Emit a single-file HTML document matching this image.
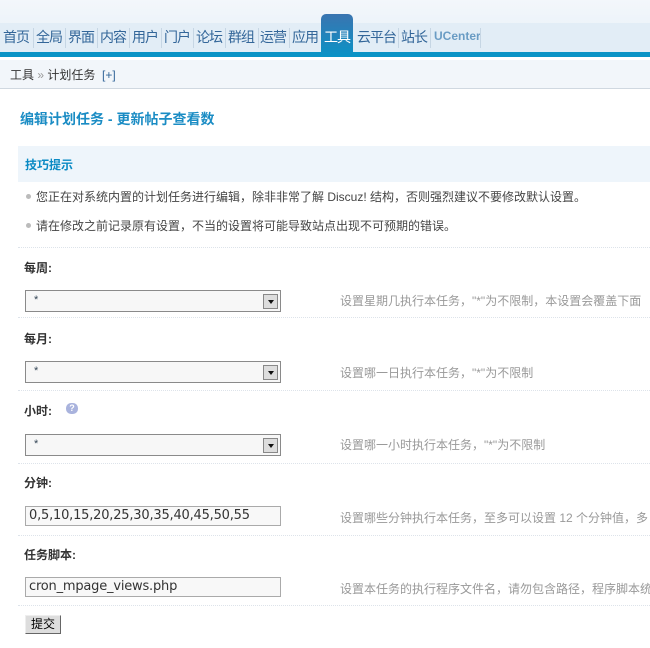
<!DOCTYPE html>
<html><head><meta charset="utf-8"><style>
*{margin:0;padding:0;box-sizing:border-box}
body{width:650px;height:648px;overflow:hidden;background:#fff;font-family:"Liberation Sans","Noto Sans CJK SC","WenQuanYi Zen Hei",sans-serif;font-size:12px;color:#333;position:relative}
.a{position:absolute}
.top{left:0;top:0;width:650px;height:52px;background:linear-gradient(#f3f7fb,#e6eff7)}
.navbg{left:0;top:23px;width:650px;height:29px;background:#e2edf6}
.line{left:0;top:52px;width:650px;height:5px;background:#0a93c6}
.nav{top:27px;font-size:14px;color:#336699;white-space:nowrap;letter-spacing:-1px}
.sep{top:28px;width:1px;height:20px;background:#c6d6e4}
.tab{left:321px;top:14px;width:32px;height:43px;background:linear-gradient(#3a74b0,#0a93c6);border-radius:5px 5px 0 0;color:#fff;font-size:14px;letter-spacing:-1px;padding-top:13px;text-align:center}
.bc{left:0;top:60px;width:650px;height:29px;background:#f2f6fa;border-bottom:1px solid #d0d8e0;padding:6px 0 0 10px;font-size:12px;color:#333}
.title{left:20px;top:109px;font-size:14px;font-weight:bold;color:#1a8cc4}
.tip{left:18px;top:146px;width:632px;height:36px;background:#eef5fb;padding:10px 0 0 7px;font-weight:bold;color:#0a8ac4;font-size:12px}
.bul{left:36px;font-size:12px;color:#444}
.dot{left:26px;width:5px;height:5px;border-radius:50%;background:#bbb}
.hr{left:18px;width:632px;border-top:1px dotted #dde3ea}
.lab{left:24px;font-weight:bold;font-size:12px;color:#333}
.sel{left:25px;width:256px;height:22px;border:1px solid #8a8a8a;background:#f7f7f7;font-size:11px;color:#345;padding:3px 8px}
.arr{right:2px;top:3px;width:15px;height:15px;border:1px solid #888;background:#ddd}
.arr:after{content:"";position:absolute;left:4px;top:5px;border:3px solid transparent;border-top:4px solid #111}
.inp{left:25px;width:256px;height:20px;border:1px solid #aaa;background:#f8f8f8;font-size:13px;color:#333;padding:1px 3px;font-family:"DejaVu Sans","Liberation Sans",sans-serif;letter-spacing:-0.2px}
.hint{left:340px;color:#999;font-size:12px;white-space:nowrap}
</style></head><body>
<div class="a top"></div><div class="a navbg"></div><div class="a line"></div>
<div class="a nav" style="left:3px">首页</div><div class="a sep" style="left:33px"></div>
<div class="a nav" style="left:36px">全局</div><div class="a sep" style="left:65px"></div>
<div class="a nav" style="left:68px">界面</div><div class="a sep" style="left:97px"></div>
<div class="a nav" style="left:100px">内容</div><div class="a sep" style="left:129px"></div>
<div class="a nav" style="left:132px">用户</div><div class="a sep" style="left:161px"></div>
<div class="a nav" style="left:164px">门户</div><div class="a sep" style="left:193px"></div>
<div class="a nav" style="left:196px">论坛</div><div class="a sep" style="left:225px"></div>
<div class="a nav" style="left:228px">群组</div><div class="a sep" style="left:258px"></div>
<div class="a nav" style="left:260px">运营</div><div class="a sep" style="left:289px"></div>
<div class="a nav" style="left:292px">应用</div>
<div class="a tab">工具</div>
<div class="a nav" style="left:357px">云平台</div><div class="a sep" style="left:398px"></div>
<div class="a nav" style="left:401px">站长</div><div class="a sep" style="left:430px"></div>
<div class="a nav" style="left:434px;font-size:12px;font-weight:bold;color:#6a9cc4;top:29px;letter-spacing:0">UCenter</div><div class="a sep" style="left:480px"></div>
<div class="a bc">工具 <span style="color:#999">»</span> 计划任务 &nbsp;<span style="color:#336699">[+]</span></div>
<div class="a title">编辑计划任务 - 更新帖子查看数</div>
<div class="a tip">技巧提示</div>
<div class="a dot" style="top:194px"></div><div class="a bul" style="top:188px">您正在对系统内置的计划任务进行编辑，除非非常了解 Discuz! 结构，否则强烈建议不要修改默认设置。</div>
<div class="a dot" style="top:223px"></div><div class="a bul" style="top:217px">请在修改之前记录原有设置，不当的设置将可能导致站点出现不可预期的错误。</div>
<div class="a hr" style="top:247px"></div>
<div class="a lab" style="top:259px">每周:</div>
<div class="a sel" style="top:290px">*<div class="a arr"></div></div>
<div class="a hint" style="top:292px">设置星期几执行本任务，"*"为不限制，本设置会覆盖下面</div>
<div class="a hr" style="top:317px"></div>
<div class="a lab" style="top:330px">每月:</div>
<div class="a sel" style="top:361px">*<div class="a arr"></div></div>
<div class="a hint" style="top:364px">设置哪一日执行本任务，"*"为不限制</div>
<div class="a hr" style="top:390px"></div>
<div class="a lab" style="top:402px">小时:</div>
<div class="a" style="left:66px;top:403px;width:12px;height:11px;border-radius:5px;background:#a9b3dd;color:#fff;font-size:9px;text-align:center;line-height:11px;font-weight:bold">?</div>
<div class="a sel" style="top:434px">*<div class="a arr"></div></div>
<div class="a hint" style="top:436px">设置哪一小时执行本任务，"*"为不限制</div>
<div class="a hr" style="top:463px"></div>
<div class="a lab" style="top:474px">分钟:</div>
<div class="a inp" style="top:506px">0,5,10,15,20,25,30,35,40,45,50,55</div>
<div class="a hint" style="top:509px">设置哪些分钟执行本任务，至多可以设置 12 个分钟值，多</div>
<div class="a hr" style="top:535px"></div>
<div class="a lab" style="top:546px">任务脚本:</div>
<div class="a inp" style="top:577px">cron_mpage_views.php</div>
<div class="a hint" style="top:580px">设置本任务的执行程序文件名，请勿包含路径，程序脚本统</div>
<div class="a hr" style="top:605px"></div>
<div class="a" style="left:25px;top:615px;width:36px;height:19px;border:1px solid;border-color:#eee #666 #666 #eee;background:#ddd;font-size:12px;text-align:center;line-height:17px;color:#000">提交</div>
</body></html>
